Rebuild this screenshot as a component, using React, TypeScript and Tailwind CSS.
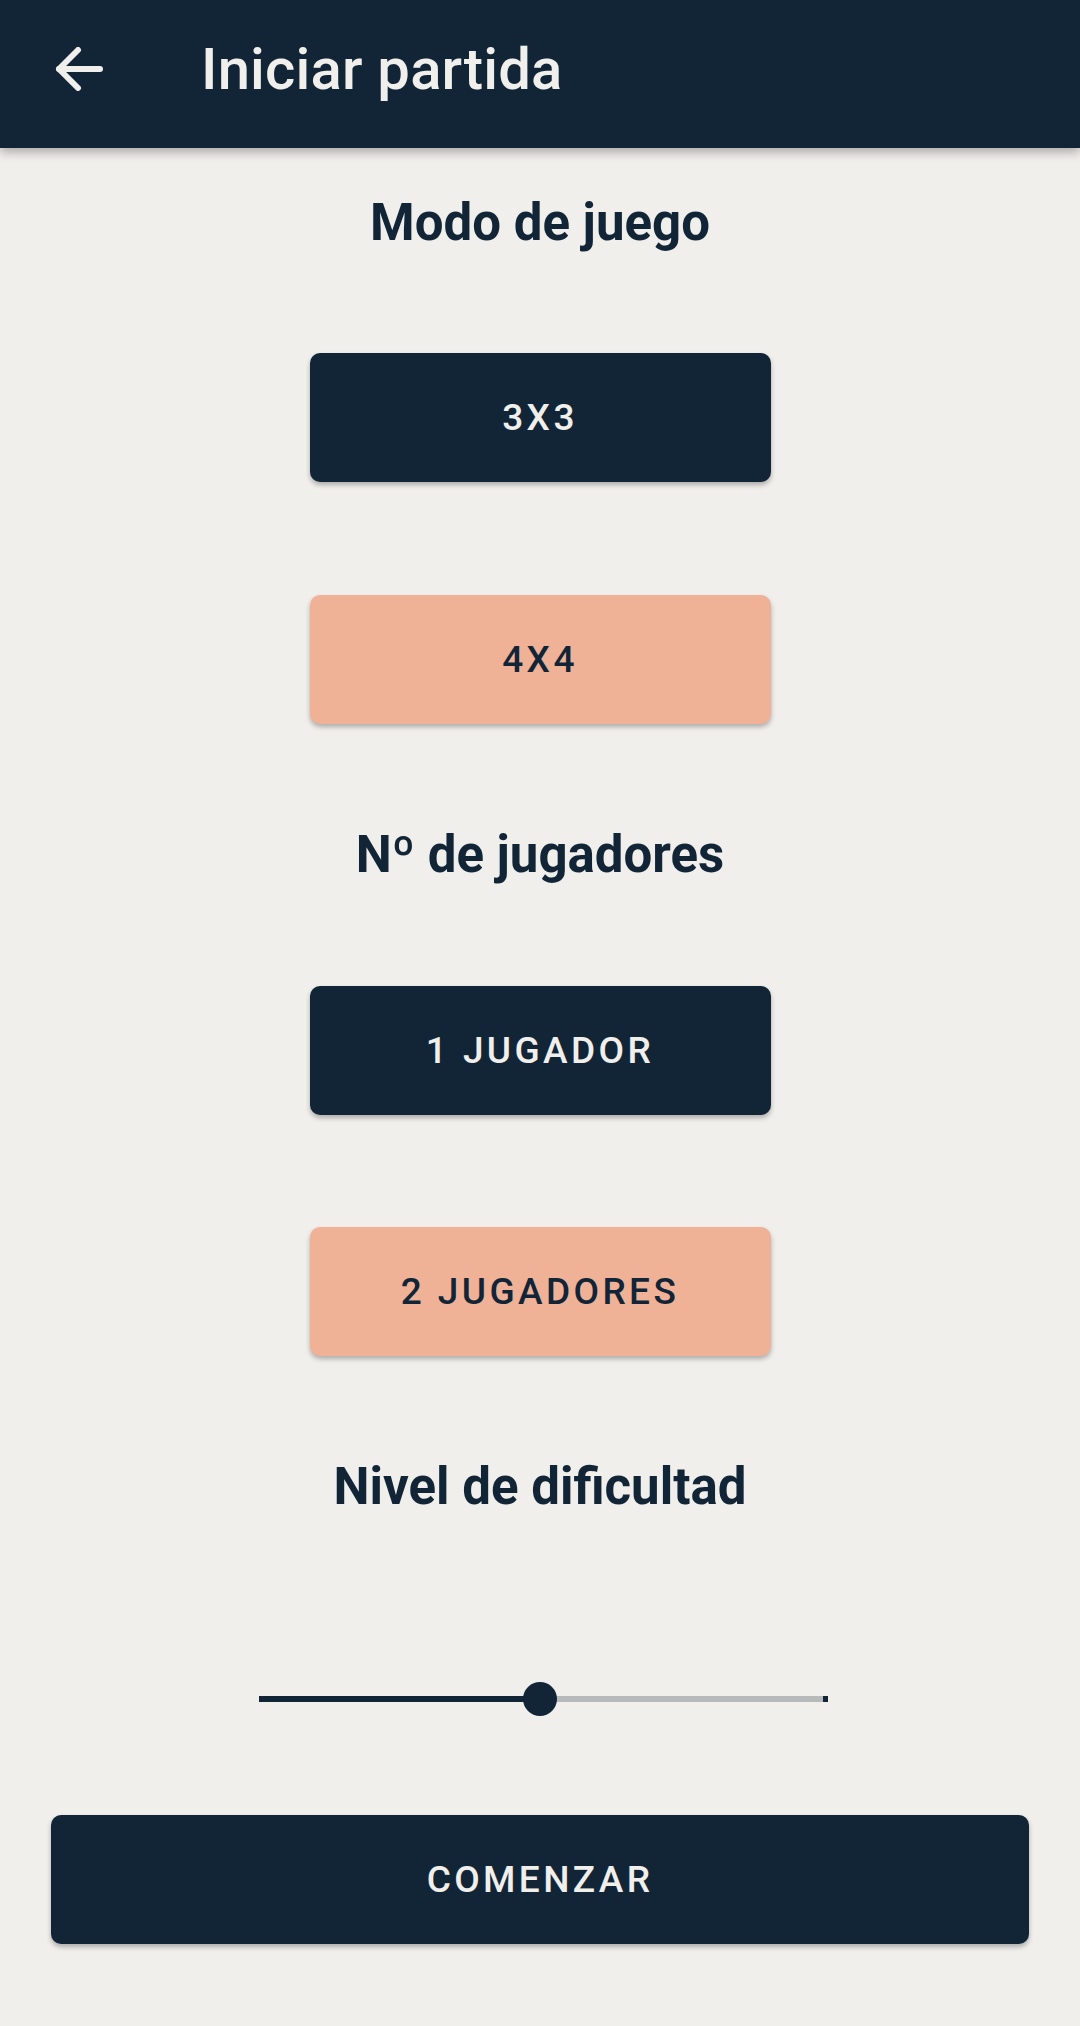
const NAVY = 'bg-[#112537]';

function OptionButton({ label, selected }: { label: string; selected: boolean }) {
  return (
    <button
      className={`mx-auto flex h-[129px] w-[461px] items-center justify-center rounded-[10px] text-[37px] font-medium tracking-[3.4px] shadow-[0_3px_5px_rgba(0,0,0,0.28)] ${
        selected ? 'bg-[#112537] text-[#f0efec]' : 'bg-[#f0b297] text-[#112537]'
      }`}
    >
      {label}
    </button>
  );
}

function SectionTitle({ children }: { children: React.ReactNode }) {
  return <h2 className="text-center text-[51px] font-bold leading-[61px] text-[#112537]">{children}</h2>;
}

export default function App() {
  // slider value in range 0..1
  const value = 0.495;

  return (
    <div className="min-h-screen bg-[#f0efec] font-['Roboto',sans-serif]">
      {/* Toolbar */}
      <header className={`relative z-10 flex h-[148px] items-start ${NAVY} shadow-[0_4px_10px_rgba(0,0,0,0.3)]`}>
        <svg
          className="ml-[55px] mt-[47px] shrink-0"
          width="48"
          height="44"
          viewBox="0 0 48 44"
          fill="none"
          stroke="#f0efec"
          strokeWidth="6"
          strokeLinecap="round"
          strokeLinejoin="round"
        >
          <path d="M4 22H45" />
          <path d="M23 3L4 22L23 41" />
        </svg>
        <h1 className="ml-[98px] mt-[35px] text-[58px] font-medium leading-[68px] tracking-[0.2px] text-[#f0efec]">
          Iniciar partida
        </h1>
      </header>

      <main className="flex flex-col pt-[44px]">
        <SectionTitle>Modo de juego</SectionTitle>
        <div className="mt-[100px]">
          <OptionButton label="3X3" selected />
        </div>
        <div className="mt-[113px]">
          <OptionButton label="4X4" selected={false} />
        </div>

        <div className="mt-[100px]">
          <SectionTitle>Nº de jugadores</SectionTitle>
        </div>
        <div className="mt-[101px]">
          <OptionButton label="1 JUGADOR" selected />
        </div>
        <div className="mt-[112px]">
          <OptionButton label="2 JUGADORES" selected={false} />
        </div>

        <div className="mt-[100px]">
          <SectionTitle>Nivel de dificultad</SectionTitle>
        </div>

        {/* Slider */}
        <div className="mt-[165px] flex justify-center pl-[6px]">
          <div className="relative flex h-[34px] w-[569px] items-center">
            <div className="h-[6px] bg-[#112537]" style={{ width: `${value * 100}%` }} />
            <div className="h-[6px] flex-1 bg-[#b7babb]" />
            <div className="h-[6px] w-[5px] bg-[#112537]" />
            <div
              className="absolute top-0 h-[34px] w-[34px] -translate-x-1/2 rounded-full bg-[#112537]"
              style={{ left: `${value * 100}%` }}
            />
          </div>
        </div>

        <div className="mt-[99px] px-[51px]">
          <button className="flex h-[129px] w-full items-center justify-center rounded-[10px] bg-[#112537] text-[37px] font-medium tracking-[3.4px] text-[#f0efec] shadow-[0_3px_5px_rgba(0,0,0,0.28)]">
            COMENZAR
          </button>
        </div>
      </main>
    </div>
  );
}
